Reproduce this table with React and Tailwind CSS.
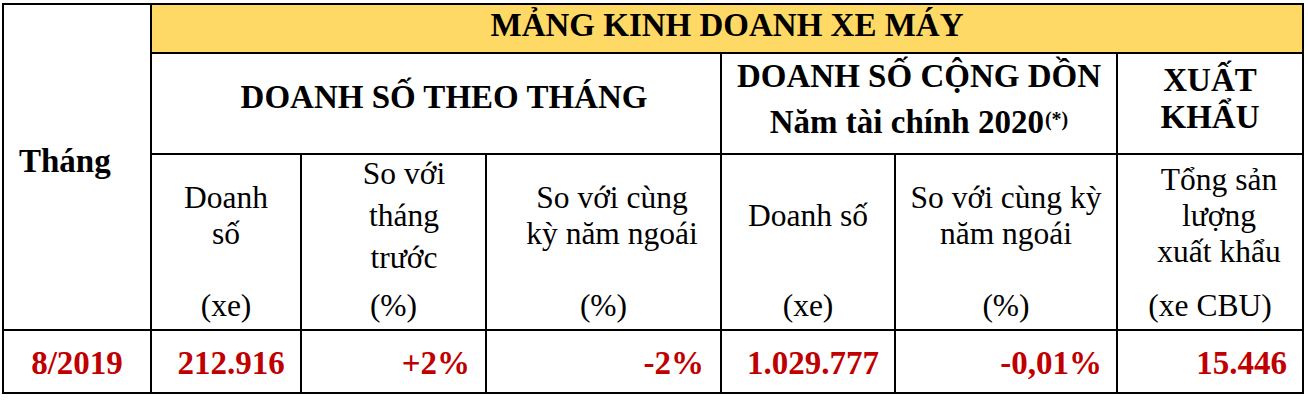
import React from "react";

// bảng doanh số xe máy - dựng lại bằng grid, đường kẻ = gap trên nền đen

const SubHead = ({ children, unit, extra = "" }) => (
  <div className="bg-white flex flex-col text-[31.5px]">
    <div
      className={`h-[122px] flex items-center justify-center text-center whitespace-nowrap ${extra}`}
    >
      <div>{children}</div>
    </div>
    <div className="mt-auto pb-[5px] leading-[36px] text-center">{unit}</div>
  </div>
);

const Num = ({ children, align = "center", extra = "" }) => (
  <div
    className={`bg-white flex items-center pt-[3px] text-[33px] font-bold leading-none text-[#c00000] whitespace-nowrap ${
      align === "right" ? "justify-end" : "justify-center"
    } ${extra}`}
  >
    {children}
  </div>
);

export default function App() {
  return (
    <div className="h-[400px] bg-white pl-[2px] pt-[3px] font-['Liberation_Serif',serif] text-black">
      <div className="grid w-[1302px] grid-cols-[146px_148px_183px_233px_172px_220px_184px] grid-rows-[47px_99px_174px_61px] gap-[2px] bg-black p-[2px]">
        {/* cột Tháng */}
        <div className="row-span-3 bg-white flex items-center pl-[15px] pb-[12px] text-[33px] font-bold leading-none">
          Tháng
        </div>

        {/* tiêu đề vàng */}
        <div className="col-span-6 bg-[#ffd966] flex items-center justify-center pb-[7px] text-[33px] font-bold leading-none">
          MẢNG KINH DOANH XE MÁY
        </div>

        {/* hàng tiêu đề 2 */}
        <div className="col-span-3 bg-white flex items-center justify-center pl-[16px] pb-[13px] text-[33px] font-bold leading-none">
          DOANH SỐ THEO THÁNG
        </div>
        <div className="col-span-2 bg-white flex items-center justify-center pb-[10px] text-center text-[33px] font-bold leading-[46px]">
          <div>
            DOANH SỐ CỘNG DỒN
            <br />
            Năm tài chính 2020
            <span className="relative top-[-7px] ml-[1px] text-[20px] leading-none">(*)</span>
          </div>
        </div>
        <div className="bg-white flex items-center justify-center pb-[10px] text-center text-[33px] font-bold leading-[37px]">
          <div>
            XUẤT
            <br />
            KHẨU
          </div>
        </div>

        {/* hàng tiêu đề 3 */}
        <SubHead unit="(xe)" extra="leading-[36px]">
          Doanh
          <br />
          số
        </SubHead>
        <SubHead unit="(%)" extra="leading-[42px] pl-[21px]">
          So với
          <br />
          tháng
          <br />
          trước
        </SubHead>
        <SubHead unit="(%)" extra="leading-[36px] pl-[17px]">
          So với cùng
          <br />
          kỳ năm ngoái
        </SubHead>
        <SubHead unit="(xe)" extra="leading-[36px]">
          Doanh số
        </SubHead>
        <SubHead unit="(%)" extra="leading-[36px]">
          So với cùng kỳ
          <br />
          năm ngoái
        </SubHead>
        <SubHead unit="(xe CBU)" extra="leading-[36px] pl-[18px]">
          Tổng sản
          <br />
          lượng
          <br />
          xuất khẩu
        </SubHead>

        {/* số liệu */}
        <Num>8/2019</Num>
        <Num extra="pl-[10px]">212.916</Num>
        <Num align="right" extra="pr-[15px]">+2%</Num>
        <Num align="right" extra="pr-[16px]">-2%</Num>
        <Num extra="pl-[10px]">1.029.777</Num>
        <Num align="right" extra="pr-[14px]">-0,01%</Num>
        <Num align="right" extra="pr-[15px]">15.446</Num>
      </div>
    </div>
  );
}
